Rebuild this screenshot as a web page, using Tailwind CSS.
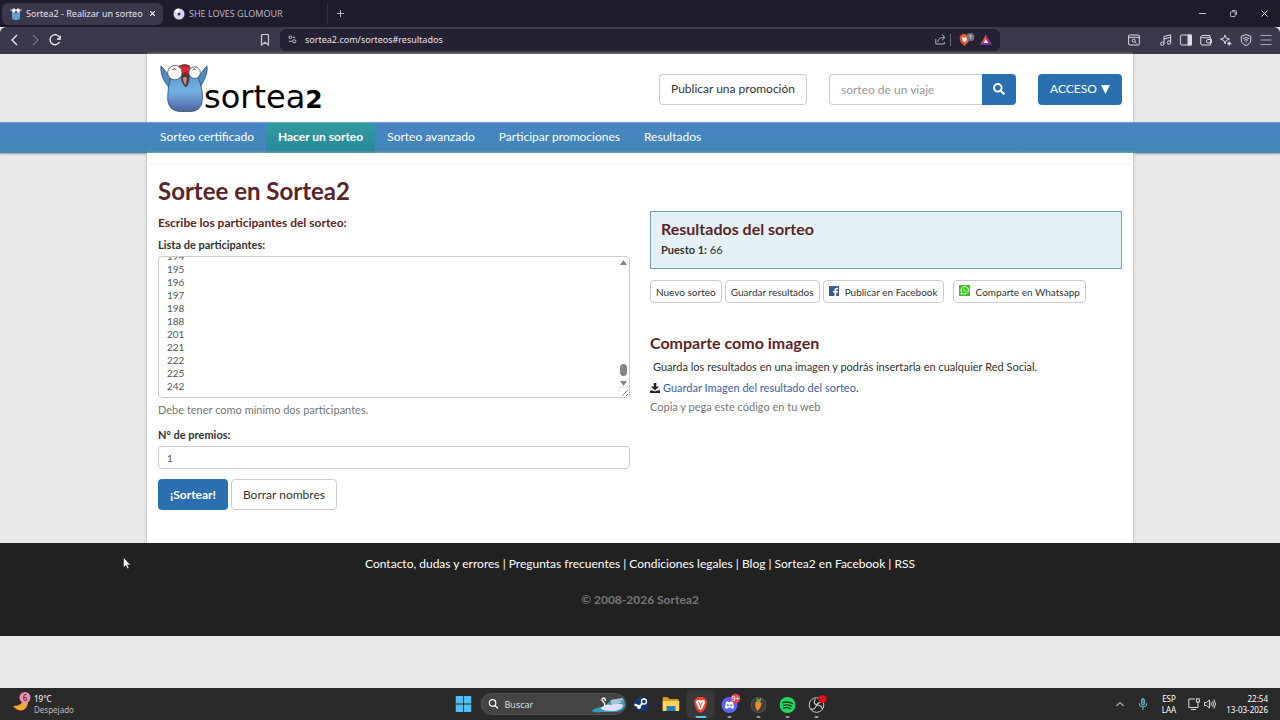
<!DOCTYPE html>
<html lang="es">

<head>
    <meta charset="UTF-8">
    <meta name="viewport" content="width=device-width, initial-scale=1.0">
    <script src="https://cdn.jsdelivr.net/npm/@tailwindcss/browser@4"></script>
    <title>Sortea2 - Realizar un sorteo</title>
</head>

<body class="h-screen flex flex-col overflow-hidden bg-[#e9e9e9] font-['Lato',sans-serif] text-[11px] leading-4 text-[#333]">

    <!-- browser window -->
    <header class="font-['Noto_Sans',sans-serif] text-[9px] leading-4 text-[#e6e3ee]">
        <div class="h-[27px] bg-[#1e1b2b] flex items-center px-0.5">
            <div class="w-[161px] h-[22px] rounded-md bg-[#3c384b] flex items-center px-2 gap-1">
                <svg class="w-3 h-3 shrink-0" viewBox="0 0 12 12">
                    <path d="M0 1l3 3M12 1L9 4" stroke="#5f93c4" stroke-width="1.5" />
                    <rect x="2" y="3" width="8" height="9" rx="3" fill="#5fa3d6" />
                    <circle cx="4" cy="2.5" r="2" fill="#fff" />
                    <circle cx="8" cy="2.5" r="2" fill="#fff" />
                    <path d="M5 3h2l-1 4z" fill="#7d2626" />
                </svg>
                <span class="flex-1 whitespace-nowrap">Sortea2 - Realizar un sorteo</span>
                <button aria-label="Cerrar pestaña">
                    <svg class="w-[5px] h-[5px]" viewBox="0 0 6 6" stroke="#fff" stroke-width="1.3"><path d="M0 0l6 6M6 0L0 6" /></svg>
                </button>
            </div>
            <div class="w-[165px] h-[22px] flex items-center px-2.5 gap-1 text-[#b9b5c4] border-r border-[#353143]">
                <svg class="w-3 h-3 shrink-0" viewBox="0 0 12 12">
                    <circle cx="6" cy="6" r="5.5" fill="#d9d5ef" />
                    <path d="M6 6L1 3.500A5.500 5.500 0 0 1 6 .5z" fill="#fff" />
                    <circle cx="6" cy="6" r="1.500" fill="#3c3458" />
                </svg>
                <span class="whitespace-nowrap">SHE LOVES GLOMOUR</span>
            </div>
            <button class="ml-[9px]" aria-label="Nueva pestaña">
                <svg class="w-[7px] h-[7px]" viewBox="0 0 8 8" stroke="#c9c5d3"><path d="M4 0v8M0 4h8" /></svg>
            </button>
            <div class="ml-auto mr-2.5 flex items-center gap-6">
                <button aria-label="Minimizar"><svg class="w-[7px] h-[7px]" viewBox="0 0 7 7" stroke="#c9c5d3"><path d="M0 3.500h7" /></svg></button>
                <button aria-label="Restaurar"><svg class="w-[7px] h-[7px]" viewBox="0 0 8 8" fill="none" stroke="#d5d2dd"><rect x=".5" y="2" width="5.500" height="5.500" rx="1" /><path d="M2.500 .5H6a1.500 1.500 0 0 1 1.500 1.500v3.500" /></svg></button>
                <button aria-label="Cerrar"><svg class="w-[7px] h-[7px]" viewBox="0 0 8 8" stroke="#fff"><path d="M.5 .5l7 7M7.500 .5l-7 7" /></svg></button>
            </div>
        </div>

        <div class="h-[27px] bg-[#3c384b] flex items-center rounded-t-md pl-[9px] pr-2 pb-0.5">
            <div class="flex items-center gap-2">
                <button aria-label="Atrás"><svg class="w-3 h-3" viewBox="0 0 12 12" fill="none" stroke="#f0eef5" stroke-width="1.300"><path d="M8 1L3 6l5 5" /></svg></button>
                <button aria-label="Adelante"><svg class="w-3 h-3" viewBox="0 0 12 12" fill="none" stroke="#7b778a" stroke-width="1.200"><path d="M4 1l5 5-5 5" /></svg></button>
                <button aria-label="Recargar"><svg class="w-3 h-3" viewBox="0 0 12 12" fill="none" stroke="#f0eef5" stroke-width="1.300"><path d="M10.500 8A5 5 0 1 1 11 5M11.300 1.800V5H8" /></svg></button>
            </div>
            <button class="ml-[199px]" aria-label="Marcador"><svg class="w-2.5 h-3" viewBox="0 0 10 12" fill="none" stroke="#cfccd8" stroke-width="1.200"><path d="M1.500 1.500a1 1 0 0 1 1-1h5a1 1 0 0 1 1 1V11L5 8.300 1.500 11z" /></svg></button>
            <div class="ml-[10px] w-[720px] h-[22px] rounded-md bg-[#242132] flex items-center px-2">
                <svg class="w-[9px] h-[9px] mr-2" viewBox="0 0 10 10" fill="none" stroke="#d5d2dd"><circle cx="2.500" cy="2.500" r="1.500" /><path d="M5 2.500h3M1 7h3.500" /><circle cx="7" cy="7" r="1.800" /></svg>
                <input aria-label="Dirección" class="flex-1 min-w-0 outline-none" value="sortea2.com/sorteos#resultados">
                <div class="flex items-center">
                    <svg class="w-[11px] h-[11px]" viewBox="0 0 11 11" fill="none" stroke="#b3afbf"><path d="M.8 5v5h8.500V8M3 8c0-3 2-4.500 6-4.500M7 .8l3 2.700-3 2.700" /></svg>
                    <span class="mx-1 w-px h-3 bg-[#6a667a]"></span>
                    <svg class="w-[17px] h-[14px] ml-1" viewBox="0 0 17 14"><path d="M2 2l3-1.500L8 2l2.500 1-1 6L5.500 13 1.500 9 .5 4z" fill="#ef5128" /><path d="M3 4l2.500.7L8 4l-.5 3.500-2 2-2-2z" fill="#fff" /><circle cx="11.500" cy="4" r="4" fill="#72707e" /><text x="11.500" y="6" font-size="6" text-anchor="middle" fill="#fff">1</text></svg>
                    <svg class="w-3 h-3 ml-1" viewBox="0 0 12 12"><path d="M6 .5L0 11h3l3-5z" fill="#f0512d" /><path d="M6 .5L12 11l-3-1.500L6 6z" fill="#a52a6d" /><path d="M0 11h12L9 8.500H3z" fill="#6535a8" /><path d="M6 5l2.300 4H3.700z" fill="#fff" /></svg>
                </div>
            </div>
            <div class="ml-auto flex items-center gap-2 text-[#dedbe6]">
                <svg class="w-3 h-3 mr-3" viewBox="0 0 12 12" fill="none" stroke="currentColor"><rect x=".6" y="1" width="10.800" height="10" rx="1" /><path d="M.6 3.300h10.800" /><circle cx="5.700" cy="6.600" r="1.500" /><path d="M7 7.800l1.500 1.400" /></svg>
                <svg class="w-3 h-3" viewBox="0 0 12 12" fill="none" stroke="currentColor"><circle cx="2.300" cy="9.700" r="1.700" /><circle cx="9" cy="8.500" r="1.700" /><path d="M4 9.700V2.500L10.700.8v7.700M4 5l6.700-1.700" /></svg>
                <svg class="w-3 h-3" viewBox="0 0 12 12" fill="none" stroke="currentColor"><rect x=".6" y="1" width="10.800" height="10" rx="1" /><path d="M8 1h3.500v10H8z" fill="currentColor" /></svg>
                <svg class="w-3 h-3" viewBox="0 0 12 12" fill="none" stroke="currentColor"><path d="M10 3.500V1.500H2a1.200 1.200 0 0 0 0 2.200h8.500v7.300H2L.7 10V2.500" /><path d="M11.500 5.500H8a1.700 1.700 0 0 0 0 3.400h3.500z" /></svg>
                <svg class="w-3 h-3" viewBox="0 0 12 12" fill="none" stroke="currentColor"><path d="M5 1l1.200 3L9.500 5.200 6.200 6.500 5 9.800 3.800 6.500.6 5.200 3.800 4z" /><path d="M9.300 7.500v4M7.300 9.500h4" stroke-width="1.300" /></svg>
                <svg class="w-3 h-3" viewBox="0 0 12 12" fill="none" stroke="currentColor"><path d="M6 .6l4.700 1.600v4c0 2.600-2 4.200-4.700 5.300C3.300 10.400 1.300 8.800 1.300 6.200v-4z" /><path d="M3 4.500q3-2 6 0M4 6.300q2-1.300 4 0M5.300 8h1.400" /></svg>
                <svg class="w-3 h-3" viewBox="0 0 12 12" stroke="#a9a5b8" stroke-width="1.200"><path d="M.5 1.500h11M.5 6h11M.5 10.500h11" /></svg>
            </div>
        </div>
    </header>

    <!-- page -->
    <div class="flex-1 min-h-0 flex flex-col">
        <div class="mx-[147px] h-[68px] shrink-0 bg-white shadow-[0_0_3px_#aaa] flex items-center pl-[13px] pr-[11px] pt-0.5">
            <a href="#" class="flex items-end text-black pb-0.5" aria-label="Sortea2">
                <svg class="w-12 h-12 -mr-1" viewBox="0 0 50 50" stroke="#34465e" stroke-width=".8">
                    <defs>
                        <linearGradient id="skin" x1="0" y1="0" x2="0" y2="1">
                            <stop offset="0" stop-color="#5b9ad0" />
                            <stop offset=".45" stop-color="#71b3e2" />
                            <stop offset="1" stop-color="#5262a5" />
                        </linearGradient>
                        <linearGradient id="beak" x1="0" y1="0" x2="0" y2="1">
                            <stop offset="0" stop-color="#b3141f" />
                            <stop offset=".4" stop-color="#ee3038" />
                            <stop offset=".8" stop-color="#a31c22" />
                        </linearGradient>
                    </defs>
                    <path d="M1 2c4 4 8 9 11 17l-3 5C4 18 0 10 1 2zM49 2c-4 4-8 9-10 17l3 5c4-7 8-14 7-22z" fill="#4e8cc6" />
                    <path d="M12 13Q25 9 39 13C43 21 45 31 44 38Q43 49 32 49.500H21Q9 49 8 37Q8 22 12 13z" fill="url(#skin)" />
                    <path d="M20 2q6-3 11 0l1 11H20z" fill="url(#beak)" />
                    <path d="M22 12q4-2 8 0 1 8-3 12-5-4-5-12z" fill="#5b322e" />
                    <path d="M24 14q2-1 4 0l-1 8q-3-2-3-8z" fill="#c98d7c" stroke="none" />
                    <circle cx="15.500" cy="9" r="7.500" fill="#fff" />
                    <circle cx="36" cy="9" r="6" fill="#fff" />
                    <path d="M13 6q2-2 4 0M34 6q2-2 3 0" fill="none" stroke="#111" />
                </svg>
                <span class="font-['DejaVu_Sans',sans-serif] text-[32px] leading-6">sortea<b class="text-[25px]">2</b></span>
            </a>
            <button class="ml-auto h-[31px] px-[11px] rounded border border-[#ccc] text-[12px]">Publicar una promoción</button>
            <form class="ml-[22px] flex" onsubmit="return false">
                <input type="text" aria-label="Buscar" placeholder="sorteo de un viaje"
                    class="w-[153px] h-[31px] pl-[11px] rounded-l border border-r-0 border-[#ccc] text-[12px] placeholder:text-[#999] outline-none">
                <button aria-label="Buscar" class="w-[34px] h-[31px] rounded-r bg-[#2a6fb0] flex items-center justify-center">
                    <svg class="w-3 h-3" viewBox="0 0 12 12" fill="none" stroke="#fff" stroke-width="2"><circle cx="4.800" cy="4.800" r="3.800" /><path d="M7.600 7.600l3.800 3.800" /></svg>
                </button>
            </form>
            <button class="ml-[22px] h-[31px] w-[84px] rounded bg-[#2a6fb0] text-white text-[12px] flex items-center justify-center gap-1">ACCESO
                <svg class="w-[9px] h-[9px]" viewBox="0 0 9 9" fill="#fff"><path d="M0 0h9L4.500 9z" /></svg>
            </button>
        </div>

        <nav class="h-[31px] shrink-0 bg-gradient-to-b from-[#4783c6] to-[#4289b5] border-t border-[#6fa0d0] shadow-[0_1px_2px_#999] px-[148px] text-[12px] text-white">
            <ul class="flex h-full leading-7">
                <li><a href="#" class="block h-full px-3">Sorteo certificado</a></li>
                <li><a href="#" class="block h-full px-3 font-bold bg-gradient-to-b from-[#329a9f] to-[#27889b]">Hacer un sorteo</a></li>
                <li><a href="#" class="block h-full px-3">Sorteo avanzado</a></li>
                <li><a href="#" class="block h-full px-3">Participar promociones</a></li>
                <li><a href="#" class="block h-full px-3">Resultados</a></li>
            </ul>
        </nav>

        <main class="mx-[147px] flex-1 min-h-0 bg-white shadow-[0_0_3px_#aaa] px-[11px] pt-[11px]">
            <div class="-mx-[11px] border-t border-[#f3f3f3]"></div>
            <div class="grid grid-cols-2 gap-5">
                <section>
                    <h1 class="mt-3 text-[24px] leading-7 font-bold text-[#5a2529]">Sortee en Sortea2</h1>
                    <h2 class="mt-2.5 text-[12px] leading-4 font-bold text-[#5a2529]">Escribe los participantes del sorteo:</h2>
                    <form onsubmit="return false">
                        <label for="participantes" class="block mt-1.5 font-bold">Lista de participantes:</label>
                        <div class="relative mt-[3px] h-[142px]">
                            <textarea id="participantes"
                                class="block w-full h-full resize-none rounded-sm border border-[#ccc] px-2 py-1 text-[10px] leading-[13px] text-[#555] outline-none [scrollbar-width:none]">192
193
194
195
196
197
198
188
201
221
222
225
242</textarea>
                            <!-- scrollbar and resize corner -->
                            <svg class="absolute right-px bottom-px w-[10px] h-[140px]" viewBox="0 0 10 140">
                                <path d="M1 8l3.500-5L8 8z" fill="#858585" />
                                <rect x="1" y="107" width="7" height="12" rx="3.500" fill="#858585" />
                                <path d="M1 124h7l-3.500 5z" fill="#858585" />
                                <path d="M0 140v-10h10" fill="none" stroke="#ddd" />
                                <path d="M3 139l6-6M7 139l2-2" stroke="#888" />
                            </svg>
                        </div>
                        <p class="mt-1 text-[#777]">Debe tener como mínimo dos participantes.</p>
                        <label for="premios" class="block mt-[9px] font-bold">Nº de premios:</label>
                        <input id="premios" type="text" value="1"
                            class="block mt-[3px] w-full h-[23px] rounded-sm border border-[#ccc] px-2 text-[10px] text-[#555] outline-none">
                        <div class="mt-2.5 flex gap-[3px]">
                            <button class="h-[31px] px-3 rounded bg-[#2a6fb0] text-white text-[12px] font-bold">¡Sortear!</button>
                            <button class="h-[31px] px-[11px] rounded border border-[#ccc] text-[12px]">Borrar nombres</button>
                        </div>
                    </form>
                </section>

                <section class="pt-[46px]">
                    <div class="h-[58px] border border-[#7b9fbd] bg-[#e4f2f7] px-2.5 pt-[7px]">
                        <h2 class="text-[16px] leading-5 font-bold text-[#5a2529]">Resultados del sorteo</h2>
                        <p class="mt-[3px]"><b>Puesto 1:</b> 66</p>
                    </div>
                    <div class="mt-[11px] flex text-[10px]">
                        <button class="h-[23px] px-[5px] rounded-sm border border-[#ccc]">Nuevo sorteo</button>
                        <button class="ml-[3px] h-[23px] px-[5px] rounded-sm border border-[#ccc]">Guardar resultados</button>
                        <button class="ml-[3px] h-[23px] px-[5px] rounded-sm border border-[#ccc] flex items-center gap-1.5">
                            <svg class="w-[10px] h-[10px] mb-0.5" viewBox="0 0 10 10"><path d="M0 0h10v10H0z" fill="#3b5998" /><path d="M5.500 10V6.500H4V5h1.500V3.500Q5.500 1.500 9 1.800v1.500Q7.200 3 7.200 4v1H9v1.500H7.200V10z" fill="#fff" /></svg>
                            Publicar en Facebook</button>
                        <button class="ml-[9px] h-[23px] px-[5px] rounded-sm border border-[#ccc] flex items-center gap-1.5">
                            <svg class="w-[11px] h-[11px] mb-0.5" viewBox="0 0 11 11"><path d="M0 0h11v11H0z" fill="#3bc321" /><path d="M2 9.200l.6-2A3.700 3.700 0 1 1 4.200 8.600z" fill="none" stroke="#fff" /><path d="M4.200 3.800q0 2.500 3 3.200l.3-1-1-.5-.5.4-.9-.9.4-.5-.5-1z" fill="#fff" /></svg>
                            Comparte en Whatsapp</button>
                    </div>
                    <h2 class="mt-[30px] text-[16px] leading-5 font-bold text-[#5a2529]">Comparte como imagen</h2>
                    <p class="mt-1.5 pl-[3px]">Guarda los resultados en una imagen y podrás insertarla en cualquier Red Social.</p>
                    <p class="mt-[5px] flex items-center gap-[3px]">
                        <svg class="w-[10px] h-[10px]" viewBox="0 0 10 10" fill="#222"><path d="M3.700 0h2.600v3.500H9L5 7.500 1 3.500h2.700zM0 7.500h3l2 1 2-1h3V10H0z" /></svg>
                        <span><a href="#" class="text-[#3a62a5]">Guardar Imagen del resultado del sorteo</a>.</span>
                    </p>
                    <p class="mt-[3px] text-[#777]">Copia y pega este código en tu web</p>
                </section>
            </div>
        </main>

        <footer class="relative h-[93px] shrink-0 bg-[#212121] pt-[13px] text-center text-[12px] text-white">
            <p class="leading-4">
                <a href="#">Contacto, dudas y errores</a> |
                <a href="#">Preguntas frecuentes</a> |
                <a href="#">Condiciones legales</a> |
                <a href="#">Blog</a> |
                <a href="#">Sortea2 en Facebook</a> |
                <a href="#">RSS</a>
            </p>
            <p class="mt-5 font-bold text-[#777]">© 2008-2026 Sortea2</p>
            <!-- pointer -->
            <svg class="absolute left-[123px] top-[14px] w-2 h-3" viewBox="0 0 8 12"><path d="M.5 .5v10l2.300-2 1.700 3.200 1.500-.8-1.500-3h3z" fill="#fff" stroke="#111" stroke-width=".5" /></svg>
        </footer>
        <div class="h-[52px] shrink-0"></div>
    </div>

    <!-- taskbar -->
    <div class="relative h-8 shrink-0 bg-[#2a2a2a] flex items-center justify-between px-3 font-['Noto_Sans',sans-serif] text-[8px] leading-[11px] text-white">
        <div class="flex items-center gap-0.5">
            <svg class="w-5 h-5 -mt-1" viewBox="0 0 20 20"><path d="M1 14Q12 14 11 5q8 4 3 11-6 6-13-2z" fill="#f5a63a" /><circle cx="13" cy="5.500" r="5.500" fill="#f08db0" /><text x="13" y="8.500" font-size="8" text-anchor="middle" fill="#4a1226">6</text></svg>
            <div>
                <p>19°C</p>
                <p class="text-[#bbb]">Despejado</p>
            </div>
        </div>

        <div class="absolute left-1/2 -translate-x-1/2 flex items-center h-8">
            <button class="mr-[9px]" aria-label="Inicio"><svg class="w-4 h-4" viewBox="0 0 16 16" fill="#4cc2f1"><path d="M0 0h7.600v7.600H0zM8.400 0H16v7.600H8.400zM0 8.400h7.600V16H0zM8.400 8.400H16V16H8.400z" /></svg></button>
            <label class="w-[146px] h-[22px] mr-[7px] rounded-full bg-[#444] border border-[#505050] flex items-center pl-[7px] overflow-hidden">
                <svg class="w-[10px] h-[10px] shrink-0" viewBox="0 0 10 10" fill="none" stroke="#fff" stroke-width="1.200"><circle cx="4" cy="4" r="3.300" /><path d="M6.500 6.500l3 3" /></svg>
                <input placeholder="Buscar" aria-label="Buscar" class="ml-1.5 flex-1 min-w-0 text-[9px] placeholder:text-[#ddd] outline-none">
                <svg class="w-[34px] h-[20px] shrink-0" viewBox="0 0 34 20">
                    <path d="M0 17q4-4 12-4L20 6q8-2 12-1l2 6q-2 7-10 7H9q-6 1-9-1z" fill="#2f9cc0" />
                    <path d="M19 6l12-2 1 2-4 1 4 1-12 3z" fill="#a9c3d0" />
                    <path d="M9 14q7-5 10-3 8-3 13 0-2 6-12 6-9 0-11-3z" fill="#e3ddf3" />
                    <path d="M11 14q4-3 1-6-3-3 0-4 2 0 2 3" fill="none" stroke="#efeafa" stroke-width="1.500" />
                    <path d="M10.500 4.500L8 6.500h2.500z" fill="#e6953d" />
                </svg>
            </label>
            <div class="flex items-center gap-[13px]">
                <svg class="w-4 h-4" viewBox="0 0 16 16"><circle cx="8" cy="8" r="7.500" fill="#123b6b" /><path d="M1 8.500l5 2L10 6" stroke="#fff" stroke-width="2" fill="none" /><circle cx="10.500" cy="5.500" r="2.500" fill="#123b6b" stroke="#fff" stroke-width="1.300" /><circle cx="5.500" cy="11" r="2" fill="#fff" /></svg>
                <svg class="w-[17px] h-4" viewBox="0 0 17 16"><path d="M0 2q0-1 1-1h4l2 2h9v12H0z" fill="#d99a1c" /><path d="M0 5h17v9q0 1-1 1H1q-1 0-1-1z" fill="#ffd45e" /><path d="M4 10h9v5H4z" fill="#2a7ebc" /></svg>
                <div class="w-7 h-7 -mx-1.5 rounded bg-[#383838] flex flex-col items-center justify-end gap-[3px]">
                    <svg class="w-[14px] h-4" viewBox="0 0 14 16"><path d="M3 1l2-1h4l2 1 2 2 .5 2-1.500 6q-1 3-5 5-4-2-5-5L.5 5 1 3z" fill="#f2432b" /><path d="M3 3.500l2.500-.5L7 3.500 8.500 3l2.500.5.5 2L10 9l-1 1 .5 1L7 13l-2.500-2 .5-1-1-1-1.500-3.500z" fill="#fff" /><path d="M4.500 5.500l1.500.5v2h2V6l1.500-.5M7 8v3" fill="none" stroke="#f2432b" stroke-width=".8" /></svg>
                    <span class="w-[11px] h-0.5 rounded bg-[#5cc5f3]"></span>
                </div>
                <div class="h-7 flex flex-col items-center justify-end gap-[3px]">
                    <svg class="w-4 h-4 overflow-visible" viewBox="0 0 16 16"><circle cx="8" cy="8" r="8" fill="#5865f2" /><path d="M3.500 11L4.500 5l2-.7.5.8h2l.5-.8 2 .7 1 6-2 1-.8-1.200H6.300L5.500 12z" fill="#fff" /><circle cx="6.300" cy="8.300" r="1" fill="#5865f2" /><circle cx="9.700" cy="8.300" r="1" fill="#5865f2" /><circle cx="14" cy="1.500" r="4.800" fill="#d84a5c" /><text x="14" y="4" font-size="7" text-anchor="middle" fill="#fff">9+</text></svg>
                    <span class="w-1 h-0.5 rounded bg-[#999]"></span>
                </div>
                <div class="h-7 flex flex-col items-center justify-end gap-[3px]">
                    <svg class="w-4 h-4" viewBox="0 0 16 16"><circle cx="8" cy="8" r="7.500" fill="#3b3e42" stroke="#56595d" /><path d="M5 5q3-2 6 1 0 4-4 8-3-3-2-9z" fill="#f48a20" /><path d="M7 5Q5 2 7 1l1 2 2-2q2 2-1 4z" fill="#66b13c" /></svg>
                    <span class="w-1 h-0.5 rounded bg-[#999]"></span>
                </div>
                <div class="h-7 flex flex-col items-center justify-end gap-[3px]">
                    <svg class="w-4 h-4" viewBox="0 0 16 16"><circle cx="8" cy="8" r="8" fill="#1ed760" /><path d="M3.500 5.500q5-1.500 9.500 1M4 8.300q4-1.200 8 .8M4.500 11q3.500-1 6.500.6" stroke="#15351f" stroke-width="1.400" stroke-linecap="round" fill="none" /></svg>
                    <span class="w-1 h-0.5 rounded bg-[#999]"></span>
                </div>
                <div class="h-7 flex flex-col items-center justify-end gap-[3px]">
                    <svg class="w-4 h-4 overflow-visible" viewBox="0 0 16 16"><circle cx="8" cy="8" r="7.300" fill="#222" stroke="#ccc" /><path d="M7 2q-3 4 1 6 5 0 6 4M8 8q-1 5-6 4M8 8q2-3 6-3" fill="none" stroke="#ccc" stroke-width="1.200" /><circle cx="14" cy="2" r="4" fill="#e80c14" /></svg>
                    <span class="w-1 h-0.5 rounded bg-[#999]"></span>
                </div>
            </div>
        </div>

        <div class="flex items-center">
            <svg class="w-2 h-2" viewBox="0 0 8 8" fill="none" stroke="#fff"><path d="M.5 6L4 2.500 7.500 6" /></svg>
            <svg class="ml-3.5 w-2.5 h-3" viewBox="0 0 10 12" fill="none" stroke="#62b8cf"><rect x="3.500" y=".6" width="3" height="6.500" rx="1.500" fill="#3d7f92" /><path d="M1 5q0 4 4 4t4-4M5 9v3" /></svg>
            <p class="ml-3.5 text-center">ESP<br>LAA</p>
            <svg class="ml-3 w-3 h-3" viewBox="0 0 12 12" fill="none" stroke="#ddd"><path d="M7 1H.8v8.500H10V6M3 11.500h5" /><rect x="8.500" y=".8" width="2.800" height="3.200" /><path d="M10 4v2" /></svg>
            <svg class="ml-1 w-3 h-3" viewBox="0 0 12 12" fill="none" stroke="#ddd"><path d="M.6 4.500h2L5.500 2v8L2.600 7.500h-2zM7 4.500q1 1.500 0 3M8.500 3q2 3 0 6M10 1.500q3 4.500 0 9" /></svg>
            <p class="ml-2.5 text-right">22:54<br>13-03-2026</p>
        </div>
    </div>

    <script>
        const lista = document.getElementById('participantes');
        lista.scrollTop = lista.scrollHeight;
    </script>
</body>

</html>
